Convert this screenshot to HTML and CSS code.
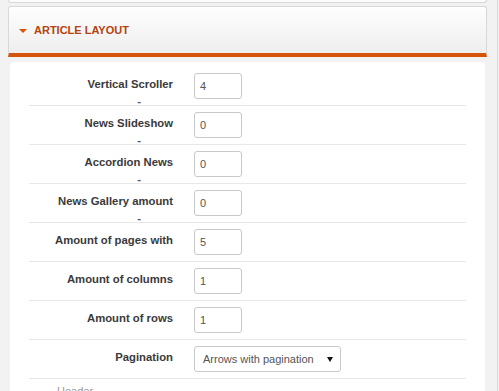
FILE: index.html
```html
<!DOCTYPE html>
<html lang="en">
<head>
<meta charset="UTF-8">
<title>Article Layout</title>
<link rel="stylesheet" href="styles.css">
</head>
<body>

<div class="wrap">
    <div class="prev-panel"></div>

    <div class="panel-head">
        <span class="caret"></span>
        <h3>ARTICLE LAYOUT</h3>
    </div>

    <div class="panel-body">
        <div class="row">
            <label class="label">Vertical Scroller<span class="dash">-</span></label>
            <input class="field" type="text" value="4">
        </div>
        <div class="row">
            <label class="label">News Slideshow<span class="dash">-</span></label>
            <input class="field" type="text" value="0">
        </div>
        <div class="row">
            <label class="label">Accordion News<span class="dash">-</span></label>
            <input class="field" type="text" value="0">
        </div>
        <div class="row">
            <label class="label">News Gallery amount<span class="dash">-</span></label>
            <input class="field" type="text" value="0">
        </div>
        <div class="row">
            <label class="label">Amount of pages with</label>
            <input class="field" type="text" value="5">
        </div>
        <div class="row">
            <label class="label">Amount of columns</label>
            <input class="field" type="text" value="1">
        </div>
        <div class="row">
            <label class="label">Amount of rows</label>
            <input class="field" type="text" value="1">
        </div>
        <div class="row">
            <label class="label">Pagination</label>
            <div class="select">
                <span>Arrows with pagination</span>
                <span class="arrow"></span>
            </div>
        </div>

        <div class="group-title"><span>Header</span></div>
    </div>
</div>

</body>
</html>
```

FILE: styles.css
```css
body {
    margin: 0;
    background-color: #f2f2f2;
    font-family: 'Liberation Sans', Arial, sans-serif;
    font-size: 11px;
    overflow: hidden;
}
.wrap {
    width: 479px;
    min-height: 391px;
    padding: 0 10px 0 8px;
    border-right: 1px solid #dadada;
}
.prev-panel {
    height: 2px;
    background-color: #fbfbfb;
    border: 1px solid #d8d8d8;
    border-top: none;
    border-radius: 0 0 3px 3px;
    margin-bottom: 3px;
}
.panel-head {
    height: 46px;
    display: flex;
    align-items: center;
    padding-left: 10px;
    border: 1px solid #d8d8d8;
    border-bottom: 4px solid #d55409;
    border-radius: 3px 3px 0 0;
    background: linear-gradient(#fefefe, #eeeeee);
}
.caret {
    width: 0;
    height: 0;
    border-left: 4px solid transparent;
    border-right: 4px solid transparent;
    border-top: 4px solid #d55409;
    margin-right: 7px;
    margin-top: 1px;
}
.panel-head h3 {
    margin: 0;
    font-size: 11px;
    font-weight: bold;
    color: #b3440f;
}
.panel-body {
    margin: 5px 2px 0;
    padding: 5px 19px 0;
    background-color: #ffffff;
    border-radius: 4px;
    min-height: 340px;
}
.row {
    display: flex;
    height: 38px;
    border-bottom: 1px solid #e8e8e8;
}
.label {
    width: 144px;
    margin-right: 21px;
    padding-top: 10px;
    text-align: right;
    font-size: 11.3px;
    font-weight: bold;
    line-height: 14px;
    color: #3a3a3a;
}
.dash {
    display: block;
    margin-top: 4px;
    padding-right: 32px;
    line-height: 12px;
    color: #555555;
}
.field {
    box-sizing: border-box;
    width: 48px;
    height: 26px;
    margin: 6px 0 0;
    padding: 0 5px;
    border: 1px solid #c8c8c8;
    border-radius: 3px;
    font-family: 'Liberation Sans', Arial, sans-serif;
    font-size: 11px;
    color: #555555;
}
.select {
    box-sizing: border-box;
    width: 147px;
    height: 26px;
    margin-top: 6px;
    padding: 0 7px 0 8px;
    display: flex;
    align-items: center;
    justify-content: space-between;
    border: 1px solid #c8c8c8;
    border-radius: 3px;
    color: #555555;
}
.arrow {
    width: 0;
    height: 0;
    border-left: 3px solid transparent;
    border-right: 3px solid transparent;
    border-top: 5px solid #111111;
}
.group-title {
    display: flex;
    align-items: center;
    margin-top: 5px;
    line-height: 14px;
    color: #9a9a9a;
}
.group-title::before {
    content: '';
    width: 24px;
    border-top: 1px solid #e0e0e0;
}
.group-title::after {
    content: '';
    flex: 1;
    border-top: 1px solid #e0e0e0;
}
.group-title span {
    padding: 0 4px;
}
```
